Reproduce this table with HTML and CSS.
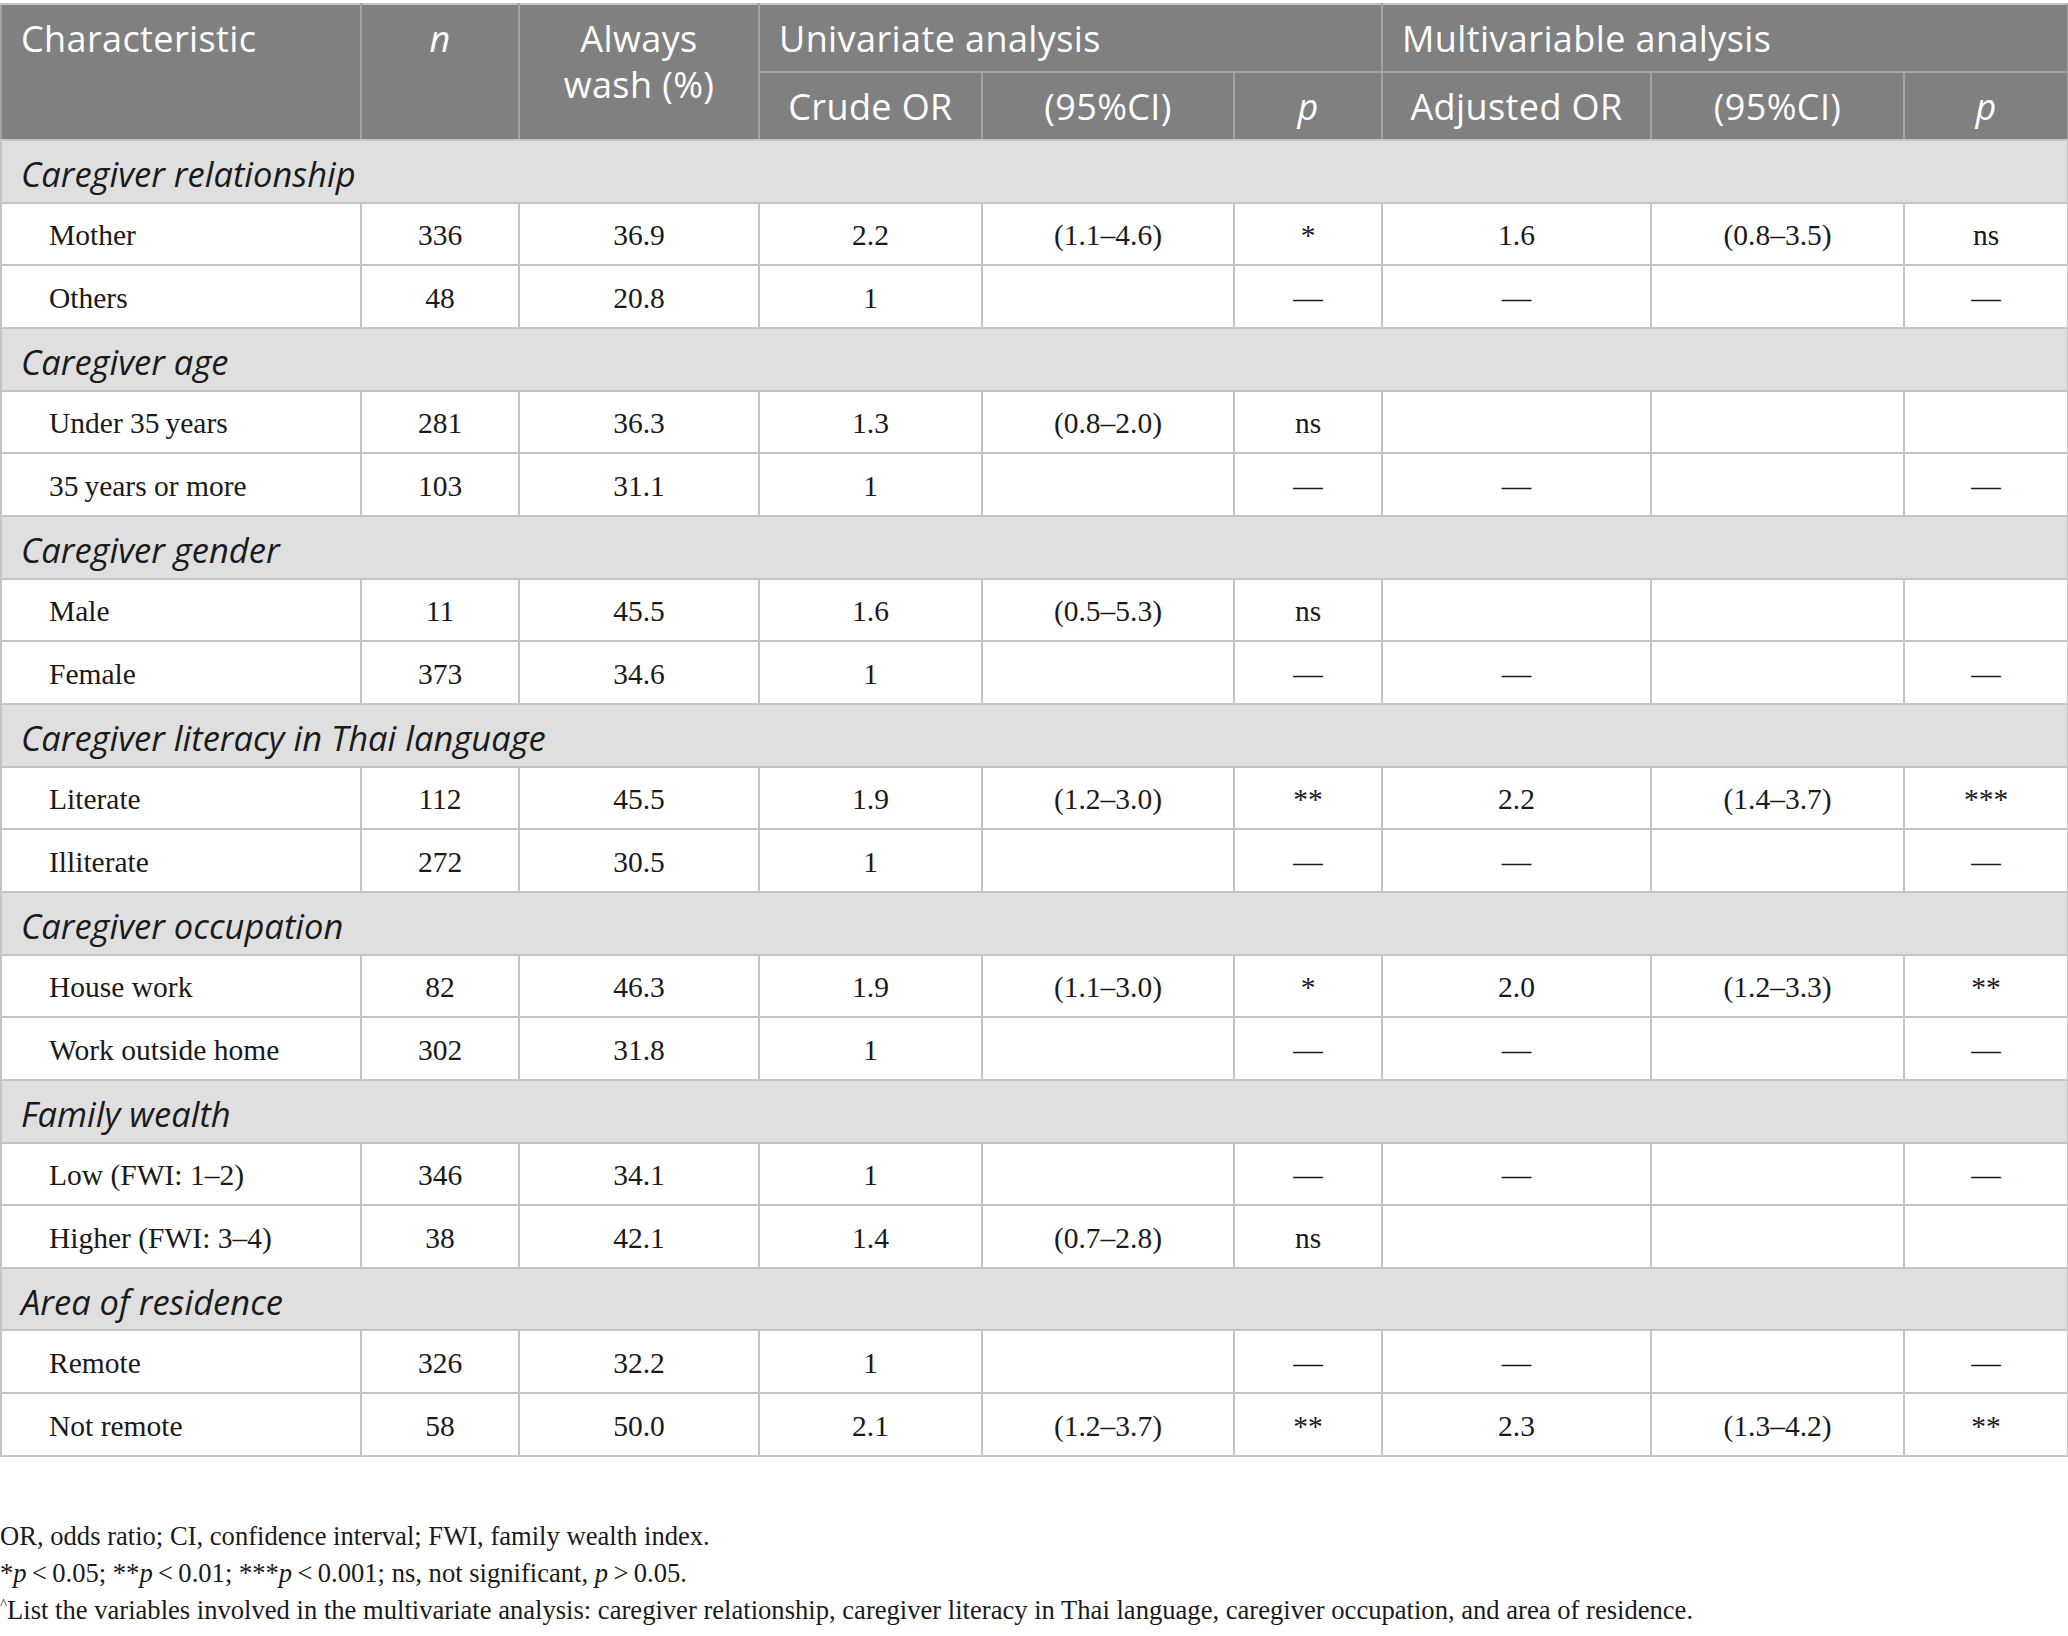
FILE: index.html
```html
<!DOCTYPE html>
<html lang="en">
<head>
<meta charset="UTF-8" />
<title>Table – handwashing by caregiver characteristic</title>
<link rel="stylesheet" href="styles.css">
</head>
<body>
  <table class="data-table">
    <colgroup>
      <col class="col-char">
      <col class="col-n">
      <col class="col-wash">
      <col class="col-or">
      <col class="col-ci">
      <col class="col-p">
      <col class="col-aor">
      <col class="col-aci">
      <col class="col-ap">
    </colgroup>
    <thead>
      <tr>
        <th rowspan="2" class="th-left th-top">Characteristic</th>
        <th rowspan="2" class="th-top"><i>n</i></th>
        <th rowspan="2" class="th-top th-wrap">Always<br>wash (%)</th>
        <th colspan="3" class="th-left">Univariate analysis</th>
        <th colspan="3" class="th-left">Multivariable analysis</th>
      </tr>
      <tr>
        <th>Crude OR</th>
        <th>(95%CI)</th>
        <th><i>p</i></th>
        <th>Adjusted OR</th>
        <th>(95%CI)</th>
        <th><i>p</i></th>
      </tr>
    </thead>
    <tbody>
      <tr class="group"><td colspan="9">Caregiver relationship</td></tr>
      <tr><td class="label">Mother</td><td>336</td><td>36.9</td><td>2.2</td><td>(1.1–4.6)</td><td>*</td><td>1.6</td><td>(0.8–3.5)</td><td>ns</td></tr>
      <tr><td class="label">Others</td><td>48</td><td>20.8</td><td>1</td><td></td><td>—</td><td>—</td><td></td><td>—</td></tr>

      <tr class="group"><td colspan="9">Caregiver age</td></tr>
      <tr><td class="label">Under 35&#8201;years</td><td>281</td><td>36.3</td><td>1.3</td><td>(0.8–2.0)</td><td>ns</td><td></td><td></td><td></td></tr>
      <tr><td class="label">35&#8201;years or more</td><td>103</td><td>31.1</td><td>1</td><td></td><td>—</td><td>—</td><td></td><td>—</td></tr>

      <tr class="group"><td colspan="9">Caregiver gender</td></tr>
      <tr><td class="label">Male</td><td>11</td><td>45.5</td><td>1.6</td><td>(0.5–5.3)</td><td>ns</td><td></td><td></td><td></td></tr>
      <tr><td class="label">Female</td><td>373</td><td>34.6</td><td>1</td><td></td><td>—</td><td>—</td><td></td><td>—</td></tr>

      <tr class="group"><td colspan="9">Caregiver literacy in Thai language</td></tr>
      <tr><td class="label">Literate</td><td>112</td><td>45.5</td><td>1.9</td><td>(1.2–3.0)</td><td>**</td><td>2.2</td><td>(1.4–3.7)</td><td>***</td></tr>
      <tr><td class="label">Illiterate</td><td>272</td><td>30.5</td><td>1</td><td></td><td>—</td><td>—</td><td></td><td>—</td></tr>

      <tr class="group"><td colspan="9">Caregiver occupation</td></tr>
      <tr><td class="label">House work</td><td>82</td><td>46.3</td><td>1.9</td><td>(1.1–3.0)</td><td>*</td><td>2.0</td><td>(1.2–3.3)</td><td>**</td></tr>
      <tr><td class="label">Work outside home</td><td>302</td><td>31.8</td><td>1</td><td></td><td>—</td><td>—</td><td></td><td>—</td></tr>

      <tr class="group"><td colspan="9">Family wealth</td></tr>
      <tr><td class="label">Low (FWI: 1–2)</td><td>346</td><td>34.1</td><td>1</td><td></td><td>—</td><td>—</td><td></td><td>—</td></tr>
      <tr><td class="label">Higher (FWI: 3–4)</td><td>38</td><td>42.1</td><td>1.4</td><td>(0.7–2.8)</td><td>ns</td><td></td><td></td><td></td></tr>

      <tr class="group"><td colspan="9">Area of residence</td></tr>
      <tr><td class="label">Remote</td><td>326</td><td>32.2</td><td>1</td><td></td><td>—</td><td>—</td><td></td><td>—</td></tr>
      <tr><td class="label">Not remote</td><td>58</td><td>50.0</td><td>2.1</td><td>(1.2–3.7)</td><td>**</td><td>2.3</td><td>(1.3–4.2)</td><td>**</td></tr>
    </tbody>
  </table>

  <div class="notes">
    <p>OR, odds ratio; CI, confidence interval; FWI, family wealth index.</p>
    <p>*<i>p</i>&#8201;&lt;&#8201;0.05; **<i>p</i>&#8201;&lt;&#8201;0.01; ***<i>p</i>&#8201;&lt;&#8201;0.001; ns, not significant, <i>p</i>&#8201;&gt;&#8201;0.05.</p>
    <p><sup>^</sup>List the variables involved in the multivariate analysis: caregiver relationship, caregiver literacy in Thai language, caregiver occupation, and area of residence.</p>
  </div>
</body>
</html>
```

FILE: styles.css
```css
:root {
  --head-bg: #808080;
  --head-line: #a3a3a3;
  --group-bg: #e0dfe0;
  --line: #c4c4c4;
  --text: #1a1a1a;
}

* {
  box-sizing: border-box;
}

body {
  margin: 0;
  padding: 3px 0 0;
  background: #fff;
  color: var(--text);
  font-family: "Liberation Serif", "Times New Roman", serif;
}

.data-table {
  width: 2067px;
  border-collapse: collapse;
  table-layout: fixed;
  border: 2px solid var(--line);
}

.col-char { width: 360px; }
.col-n { width: 158px; }
.col-wash { width: 240px; }
.col-or { width: 223px; }
.col-ci { width: 252px; }
.col-p { width: 148px; }
.col-aor { width: 269px; }
.col-aci { width: 253px; }
.col-ap { width: 164px; }

/* header */
th {
  background: var(--head-bg);
  color: #fff;
  font-family: "Open Sans", "Liberation Sans", sans-serif;
  font-weight: 400;
  font-size: 36px;
  letter-spacing: 0.4px;
  line-height: 42px;
  height: 68px;
  padding: 9px 12px 7px;
  text-align: center;
  vertical-align: middle;
  border: 2px solid var(--head-line);
}

thead tr:first-child th {
  border-top-color: var(--line);
}

thead tr:last-child th,
th[rowspan] {
  border-bottom-color: var(--line);
}

.th-left {
  text-align: left;
  padding-left: 19px;
}

.th-top {
  vertical-align: top;
  padding-top: 13px;
}

.th-wrap {
  line-height: 46px;
  padding-top: 11px;
}

/* body */
td {
  height: 62.67px;
  padding: 4px 12px 0;
  font-size: 29.5px;
  text-align: center;
  vertical-align: middle;
  border: 2px solid var(--line);
}

td.label {
  text-align: left;
  padding-left: 47px;
}

.group td {
  background: var(--group-bg);
  text-align: left;
  padding-left: 19px;
  font-family: "Open Sans", "Liberation Sans", sans-serif;
  font-style: italic;
  font-size: 34.5px;
}

/* footnotes */
.notes {
  margin-top: 61px;
  font-size: 26.6px;
  line-height: 37px;
}

.notes p {
  margin: 0;
}

.notes sup {
  font-size: 15px;
  vertical-align: 10px;
  line-height: 0;
}
```
